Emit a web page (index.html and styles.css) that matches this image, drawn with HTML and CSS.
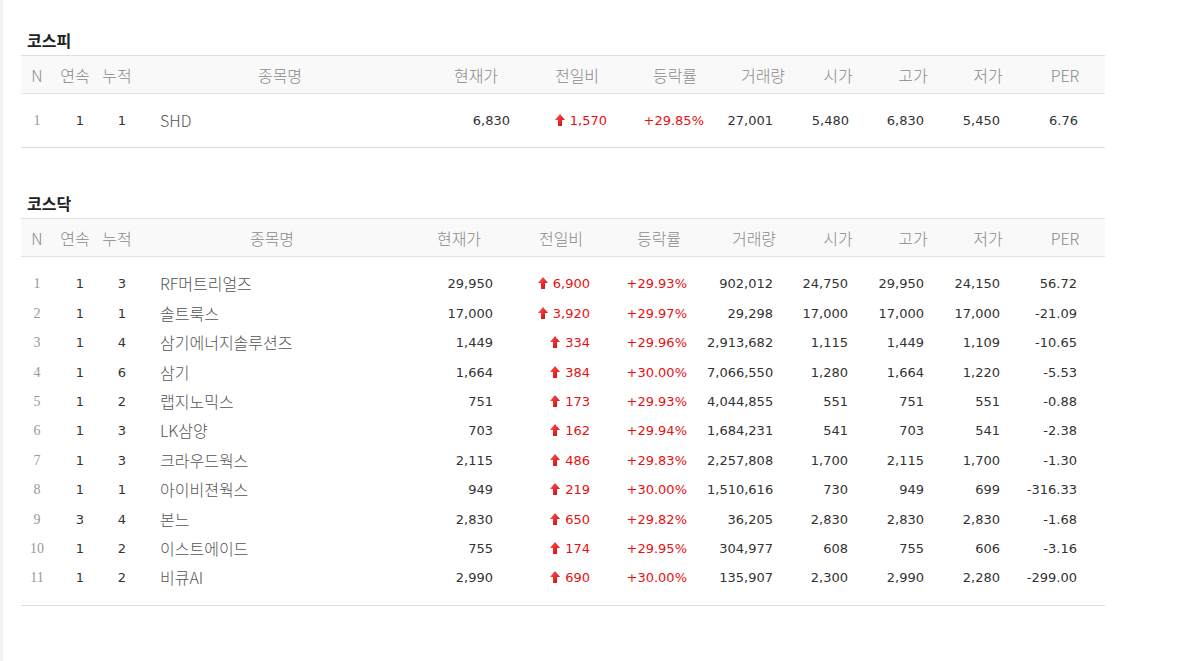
FILE: index.html
```html
<!DOCTYPE html>
<html lang="ko">
<head>
<meta charset="utf-8">
<title>상한가</title>
<link rel="stylesheet" href="styles.css">
</head>
<body>
<svg class="sprite" width="0" height="0" aria-hidden="true">
  <defs>
    <linearGradient id="arrowGrad" x1="0" y1="0" x2="1" y2="1">
      <stop offset="0" stop-color="#ff5a5a"/>
      <stop offset="1" stop-color="#d40000"/>
    </linearGradient>
    <symbol id="arrow-up" viewBox="0 0 10 12">
      <path d="M5 0 L10 6 L7 6 L7 12 L3 12 L3 6 L0 6 Z" fill="url(#arrowGrad)"/>
    </symbol>
  </defs>
</svg>
<div class="page">
  <section class="market">
    <h2 class="market-title">코스피</h2>
    <table class="stocks kospi">
      <colgroup>
        <col style="width:32px"><col style="width:44px"><col style="width:40px"><col style="width:286px">
        <col style="width:106px"><col style="width:96px"><col style="width:100px"><col style="width:76px">
        <col style="width:74px"><col style="width:76px"><col style="width:74px"><col style="width:80px">
      </colgroup>
      <thead>
        <tr><th>N</th><th>연속</th><th>누적</th><th>종목명</th><th>현재가</th><th>전일비</th><th>등락률</th><th>거래량</th><th>시가</th><th>고가</th><th>저가</th><th>PER</th></tr>
      </thead>
      <tbody>
        <tr><td class="rank">1</td><td class="cnt">1</td><td class="cnt">1</td><td class="name">SHD</td><td>6,830</td><td class="up"><svg class="arrow"><use href="#arrow-up"/></svg>1,570</td><td class="up">+29.85%</td><td>27,001</td><td>5,480</td><td>6,830</td><td>5,450</td><td>6.76</td></tr>
      </tbody>
    </table>
  </section>

  <section class="market">
    <h2 class="market-title">코스닥</h2>
    <table class="stocks kosdaq">
      <colgroup>
        <col style="width:32px"><col style="width:44px"><col style="width:40px"><col style="width:270px">
        <col style="width:104px"><col style="width:100px"><col style="width:96px"><col style="width:94px">
        <col style="width:74px"><col style="width:76px"><col style="width:74px"><col style="width:80px">
      </colgroup>
      <thead>
        <tr><th>N</th><th>연속</th><th>누적</th><th>종목명</th><th>현재가</th><th>전일비</th><th>등락률</th><th>거래량</th><th>시가</th><th>고가</th><th>저가</th><th>PER</th></tr>
      </thead>
      <tbody>
        <tr><td class="rank">1</td><td class="cnt">1</td><td class="cnt">3</td><td class="name">RF머트리얼즈</td><td>29,950</td><td class="up"><svg class="arrow"><use href="#arrow-up"/></svg>6,900</td><td class="up">+29.93%</td><td>902,012</td><td>24,750</td><td>29,950</td><td>24,150</td><td>56.72</td></tr>
        <tr><td class="rank">2</td><td class="cnt">1</td><td class="cnt">1</td><td class="name">솔트룩스</td><td>17,000</td><td class="up"><svg class="arrow"><use href="#arrow-up"/></svg>3,920</td><td class="up">+29.97%</td><td>29,298</td><td>17,000</td><td>17,000</td><td>17,000</td><td>-21.09</td></tr>
        <tr><td class="rank">3</td><td class="cnt">1</td><td class="cnt">4</td><td class="name">삼기에너지솔루션즈</td><td>1,449</td><td class="up"><svg class="arrow"><use href="#arrow-up"/></svg>334</td><td class="up">+29.96%</td><td>2,913,682</td><td>1,115</td><td>1,449</td><td>1,109</td><td>-10.65</td></tr>
        <tr><td class="rank">4</td><td class="cnt">1</td><td class="cnt">6</td><td class="name">삼기</td><td>1,664</td><td class="up"><svg class="arrow"><use href="#arrow-up"/></svg>384</td><td class="up">+30.00%</td><td>7,066,550</td><td>1,280</td><td>1,664</td><td>1,220</td><td>-5.53</td></tr>
        <tr><td class="rank">5</td><td class="cnt">1</td><td class="cnt">2</td><td class="name">랩지노믹스</td><td>751</td><td class="up"><svg class="arrow"><use href="#arrow-up"/></svg>173</td><td class="up">+29.93%</td><td>4,044,855</td><td>551</td><td>751</td><td>551</td><td>-0.88</td></tr>
        <tr><td class="rank">6</td><td class="cnt">1</td><td class="cnt">3</td><td class="name">LK삼양</td><td>703</td><td class="up"><svg class="arrow"><use href="#arrow-up"/></svg>162</td><td class="up">+29.94%</td><td>1,684,231</td><td>541</td><td>703</td><td>541</td><td>-2.38</td></tr>
        <tr><td class="rank">7</td><td class="cnt">1</td><td class="cnt">3</td><td class="name">크라우드웍스</td><td>2,115</td><td class="up"><svg class="arrow"><use href="#arrow-up"/></svg>486</td><td class="up">+29.83%</td><td>2,257,808</td><td>1,700</td><td>2,115</td><td>1,700</td><td>-1.30</td></tr>
        <tr><td class="rank">8</td><td class="cnt">1</td><td class="cnt">1</td><td class="name">아이비젼웍스</td><td>949</td><td class="up"><svg class="arrow"><use href="#arrow-up"/></svg>219</td><td class="up">+30.00%</td><td>1,510,616</td><td>730</td><td>949</td><td>699</td><td>-316.33</td></tr>
        <tr><td class="rank">9</td><td class="cnt">3</td><td class="cnt">4</td><td class="name">본느</td><td>2,830</td><td class="up"><svg class="arrow"><use href="#arrow-up"/></svg>650</td><td class="up">+29.82%</td><td>36,205</td><td>2,830</td><td>2,830</td><td>2,830</td><td>-1.68</td></tr>
        <tr><td class="rank">10</td><td class="cnt">1</td><td class="cnt">2</td><td class="name">이스트에이드</td><td>755</td><td class="up"><svg class="arrow"><use href="#arrow-up"/></svg>174</td><td class="up">+29.95%</td><td>304,977</td><td>608</td><td>755</td><td>606</td><td>-3.16</td></tr>
        <tr><td class="rank">11</td><td class="cnt">1</td><td class="cnt">2</td><td class="name">비큐AI</td><td>2,990</td><td class="up"><svg class="arrow"><use href="#arrow-up"/></svg>690</td><td class="up">+30.00%</td><td>135,907</td><td>2,300</td><td>2,990</td><td>2,280</td><td>-299.00</td></tr>
      </tbody>
    </table>
  </section>
</div>
</body>
</html>
```
FILE: styles.css
```css
* { box-sizing: border-box; }

html, body {
  margin: 0;
  background: #fff;
}

.sprite {
  display: block;
  width: 0;
  height: 0;
  overflow: hidden;
}

.page {
  min-height: 661px;
  border-left: 3px solid #f2f2f2;
  padding: 30px 0 0 18px;
  font-family: "DejaVu Sans", sans-serif;
}

.market + .market {
  margin-top: 45px;
}

.market-title {
  margin: 0 0 5px 6px;
  font: 700 16px/20px "Noto Sans CJK KR", sans-serif;
  color: #222;
}

.stocks {
  width: 1084px;
  table-layout: fixed;
  border-collapse: collapse;
  border-bottom: 1px solid #dedede;
}

.stocks th {
  height: 38px;
  padding: 0;
  background: #f9f9f9;
  border-top: 1px solid #e0e0e0;
  border-bottom: 1px solid #e4e4e4;
  font: 300 16px/20px "Noto Sans CJK KR", sans-serif;
  color: #8a8a8a;
  text-align: center;
}

.stocks td {
  padding: 0;
  font-size: 13px;
  line-height: 29.4px;
  color: #333;
  text-align: right;
  white-space: nowrap;
  vertical-align: middle;
}

.stocks tbody tr:first-child td { padding-top: 12px; }
.stocks tbody tr:last-child td { padding-bottom: 12px; }

.stocks td.rank {
  text-align: center;
  font-family: "Liberation Serif", serif;
  font-size: 14px;
  color: #999;
}

.stocks td.cnt {
  text-align: center;
  padding-left: 10px;
}

.stocks td.name {
  text-align: left;
  padding-left: 23px;
  font: 300 16px/29.4px "Noto Sans CJK KR", sans-serif;
  color: #555;
}

.stocks td.up { color: #e81010; }

.arrow {
  width: 10px;
  height: 12px;
  margin-right: 5px;
  vertical-align: -1px;
}

.kospi td:nth-child(5) { padding-right: 19px; }
.kospi td:nth-child(6) { padding-right: 18px; }
.kospi td:nth-child(7) { padding-right: 21px; }
.kospi td:nth-child(8) { padding-right: 28px; }
.kospi td:nth-child(9) { padding-right: 26px; }
.kospi td:nth-child(10) { padding-right: 27px; }
.kospi td:nth-child(11) { padding-right: 25px; }
.kospi td:nth-child(12) { padding-right: 27px; }

.kosdaq td:nth-child(5) { padding-right: 18px; }
.kosdaq td:nth-child(6) { padding-right: 21px; }
.kosdaq td:nth-child(7) { padding-right: 20px; }
.kosdaq td:nth-child(8) { padding-right: 28px; }
.kosdaq td:nth-child(9) { padding-right: 27px; }
.kosdaq td:nth-child(10) { padding-right: 27px; }
.kosdaq td:nth-child(11) { padding-right: 25px; }
.kosdaq td:nth-child(12) { padding-right: 28px; }
```
